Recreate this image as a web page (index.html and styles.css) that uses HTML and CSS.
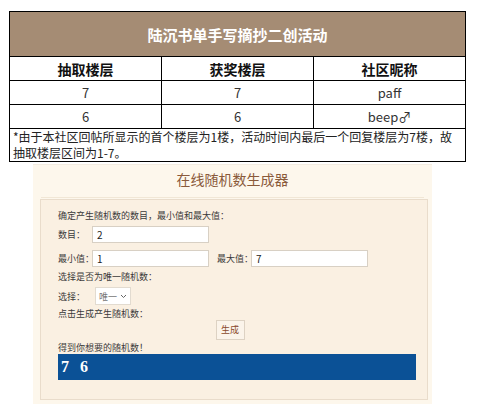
FILE: index.html
```html
<!DOCTYPE html>
<html lang="zh-CN">
<head>
    <meta charset="UTF-8">
    <title>陆沉书单手写摘抄二创活动</title>
    <link rel="stylesheet" href="styles.css">
</head>
<body>
    <table class="result-table">
        <tr>
            <th colspan="3" class="title">陆沉书单手写摘抄二创活动</th>
        </tr>
        <tr class="head">
            <td>抽取楼层</td>
            <td>获奖楼层</td>
            <td>社区昵称</td>
        </tr>
        <tr>
            <td>7</td>
            <td>7</td>
            <td>paff</td>
        </tr>
        <tr>
            <td>6</td>
            <td>6</td>
            <td>beep♂</td>
        </tr>
        <tr>
            <td colspan="3" class="note">*由于本社区回帖所显示的首个楼层为1楼，活动时间内最后一个回复楼层为7楼，故<br>抽取楼层区间为1-7。</td>
        </tr>
    </table>

    <div class="generator">
        <div class="gen-title">在线随机数生成器</div>
        <div class="gen-box">
            <div class="line">确定产生随机数的数目，最小值和最大值：</div>
            <div class="field field-count">
                <span class="label">数目：</span>
                <span class="input">2</span>
            </div>
            <div class="field field-range">
                <span class="label">最小值：</span>
                <span class="input">1</span>
                <span class="label label-max">最大值：</span>
                <span class="input">7</span>
            </div>
            <div class="line">选择是否为唯一随机数：</div>
            <div class="field field-select">
                <span class="label">选择：</span>
                <span class="select">唯一 <svg width="7" height="5" viewBox="0 0 7 5"><path d="M1 1 L3.5 3.5 L6 1" fill="none" stroke="#666" stroke-width="1"/></svg></span>
            </div>
            <div class="line">点击生成产生随机数：</div>
            <div class="btn-row"><span class="btn">生成</span></div>
            <div class="line">得到你想要的随机数！</div>
            <div class="output">7 6</div>
        </div>
    </div>
</body>
</html>
```

FILE: styles.css
```css
body {
    margin: 0;
    background: #fff;
    font-family: "Noto Sans CJK SC", "Noto Sans", sans-serif;
    color: #000;
}

.result-table {
    margin: 11px 0 0 9px;
    width: 457px;
    border-collapse: collapse;
    table-layout: fixed;
}

.result-table td,
.result-table th {
    border: 1px solid #000;
    text-align: center;
    padding: 0;
    height: 23px;
    font-size: 13px;
    color: #333;
}

.result-table .title {
    height: 44px;
    background: #a58c74;
    color: #fff;
    font-size: 15px;
    font-weight: bold;
}

.result-table .head td {
    font-weight: bold;
    font-size: 14px;
    color: #111;
}

.result-table .note {
    text-align: left;
    font-size: 12px;
    line-height: 16px;
    padding: 0 0 0 3px;
    height: 32px;
    color: #222;
}

.generator {
    margin: 2px 0 0 33px;
    width: 399px;
    height: 241px;
    background: #fdf7ec;
    box-sizing: border-box;
    padding: 34px 4px 0 7px;
    position: relative;
    border-top: 1px solid #f3ece0;
}

.gen-title {
    position: absolute;
    top: 4px;
    left: 0;
    right: 0;
    text-align: center;
    font-size: 14px;
    color: #8a5a3a;
    padding-bottom: 8px;
    border-bottom: 1px solid #f1e7d6;
    margin: 0 8px;
}

.gen-box {
    height: 201px;
    border: 1px solid #e9dccb;
    background: #faf0e2;
    box-sizing: border-box;
    padding: 10px 11px 0 17px;
    font-size: 9px;
    color: #3a3a3a;
}

.line {
    height: 12px;
    line-height: 12px;
    white-space: nowrap;
}

.field {
    display: flex;
    align-items: center;
    height: 17px;
    white-space: nowrap;
}

.field-count {
    margin: 4px 0 7px;
}

.field-range {
    margin-bottom: 4px;
}

.field-select {
    height: 18px;
    margin: 4px 0 3px;
}

.label {
    width: 34px;
}

.label-max {
    margin-left: 8px;
}

.input {
    width: 117px;
    height: 17px;
    box-sizing: border-box;
    border: 1px solid #d8d0c4;
    background: #fff;
    font-size: 10px;
    padding-left: 4px;
    line-height: 15px;
    color: #222;
}

.select {
    margin-left: 3px;
    width: 36px;
    height: 18px;
    box-sizing: border-box;
    border: 1px solid #e2dbd0;
    background: #fff;
    display: flex;
    align-items: center;
    justify-content: center;
    gap: 3px;
    color: #777;
}

.btn-row {
    display: flex;
    justify-content: center;
    padding-right: 14px;
    margin-bottom: 2px;
}

.btn {
    width: 27px;
    height: 18px;
    border: 1px solid #ddd2c3;
    background: #fbf4ea;
    color: #8a4a2a;
    text-align: center;
    line-height: 18px;
    font-size: 9px;
}

.output {
    width: 358px;
    height: 26px;
    background: #0b5196;
    color: #fff;
    font-family: "Liberation Serif", serif;
    font-weight: bold;
    font-size: 16px;
    line-height: 26px;
    padding-left: 3px;
    box-sizing: border-box;
    word-spacing: 7px;
}
```
